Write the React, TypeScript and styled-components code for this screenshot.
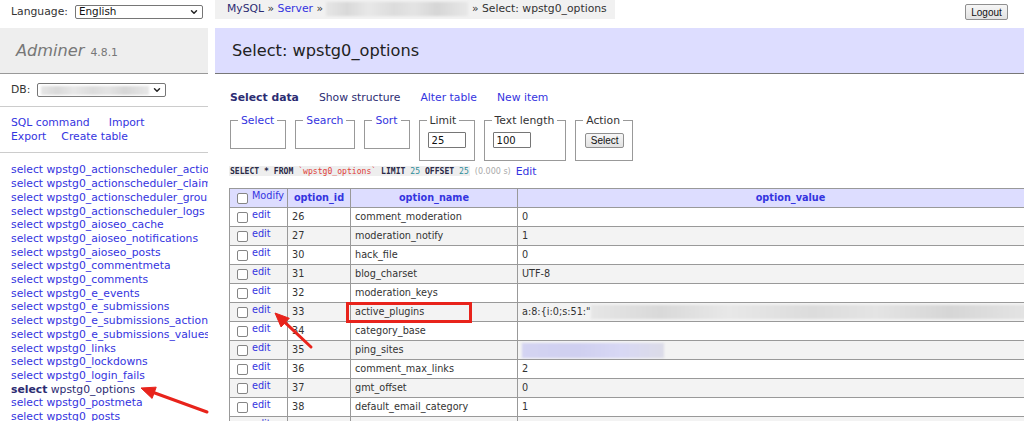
import React from "react";
import styled, { createGlobalStyle } from "styled-components";
import { ChevronDown } from "lucide-react";

const GlobalStyle = createGlobalStyle`
  body {
    margin: 0;
    background: #fff;
    color: #222;
    font: 10.8px/13.7px "DejaVu Sans", Verdana, sans-serif;
    overflow: hidden;
  }
`;

const LINK = "#3434e0";
const VISITED = "#2c2c72";

const Page = styled.div`
  position: relative;
  display: flex;
  width: 1024px;
  height: 421px;
  overflow: hidden;
`;

const Sidebar = styled.aside`
  flex: none;
  width: 208px;
`;

const LangRow = styled.div`
  display: flex;
  align-items: center;
  gap: 7px;
  height: 15px;
  padding: 4px 0 9px 11px;
  color: #333;
`;

const FakeSelect = styled.div<{ $w: number }>`
  position: relative;
  display: flex;
  align-items: center;
  justify-content: space-between;
  box-sizing: border-box;
  width: ${(p) => p.$w}px;
  height: 14px;
  padding: 0 3px;
  border: 1px solid #767676;
  border-radius: 2px;
  background: #fff;
  color: #111;
  font-size: 10.4px;
  svg {
    flex: none;
  }
`;

const Blur = styled.span<{ $w: number; $h: number; $tint?: string }>`
  display: inline-block;
  width: ${(p) => p.$w}px;
  height: ${(p) => p.$h}px;
  vertical-align: middle;
  background: ${(p) =>
    p.$tint ??
    "linear-gradient(90deg, #e6e6e6 0%, #d9d9d9 15%, #e8e8e8 30%, #dcdcdc 48%, #e4e4e4 62%, #d6d6d6 78%, #e8e8e8 100%)"};
  filter: blur(1.2px);
`;

const Brand = styled.h1`
  display: flex;
  align-items: baseline;
  gap: 6px;
  height: 45px;
  margin: 0;
  padding: 0 0 0 16px;
  box-sizing: content-box;
  background: #eee;
  border-bottom: 1px solid #999;
  color: #777;
  font-weight: normal;
  line-height: 46px;
  font-size: 16.2px;
`;

const BrandName = styled.span`
  font-style: italic;
`;

const Version = styled.span`
  font-size: 10.8px;
`;

const Section = styled.div<{ $pad: string }>`
  padding: ${(p) => p.$pad};
  border-bottom: 1px solid #ccc;
`;

const DbRow = styled.div`
  display: flex;
  align-items: center;
  gap: 7px;
  color: #333;
`;

const LinkLine = styled.div`
  display: flex;
  gap: 15px;
`;

const A = styled.a<{ $visited?: boolean; $bold?: boolean }>`
  color: ${(p) => (p.$visited ? VISITED : LINK)};
  font-weight: ${(p) => (p.$bold ? "bold" : "normal")};
  text-decoration: none;
  cursor: pointer;
`;

const TableList = styled.ul`
  list-style: none;
  margin: 0;
  padding: 10px 0 0 11px;
`;

const TableItem = styled.li`
  white-space: nowrap;
  overflow: hidden;
`;

const Main = styled.main`
  flex: 1;
  min-width: 0;
  margin-left: 7px;
`;

const TopBar = styled.div`
  display: flex;
  justify-content: space-between;
  align-items: flex-start;
  height: 28px;
`;

const Breadcrumb = styled.div`
  height: 19px;
  padding: 0 8px 0 12px;
  background: #f1f1f1;
  line-height: 18px;
  color: #333;
  white-space: nowrap;
`;

const LogoutButton = styled.button`
  margin: 4px 16px 0 0;
  width: 43px;
  height: 16px;
  padding: 0;
  border: 1px solid #8f8f8f;
  border-radius: 2px;
  background: linear-gradient(#f6f6f6, #e2e2e2);
  color: #111;
  font: 10px "Liberation Sans", Arial, sans-serif;
`;

const Heading = styled.h2`
  margin: 0;
  height: 45px;
  padding-left: 17px;
  background: #ddf;
  border-bottom: 1px solid #777;
  color: #222;
  font-weight: normal;
  font-size: 16.2px;
  line-height: 46px;
`;

const Content = styled.div`
  padding-left: 15px;
`;

const Nav = styled.div`
  display: flex;
  gap: 20px;
  margin-top: 17px;
`;

const Forms = styled.div`
  display: flex;
  align-items: flex-start;
  gap: 9px;
  margin-top: 9px;
`;

const Fieldset = styled.fieldset<{ $empty?: boolean }>`
  margin: 0;
  min-width: 0;
  padding: 5px 8px ${(p) => (p.$empty ? "16px" : "12px")} 7px;
  border: 1px solid #999;
`;

const Legend = styled.legend`
  padding: 0 3px;
  color: #333;
`;

const SmallInput = styled.input<{ $w: number }>`
  box-sizing: border-box;
  width: ${(p) => p.$w}px;
  height: 16px;
  margin: 0 0 0 1px;
  padding: 0 3px;
  border: 1px solid #767676;
  border-radius: 1px;
  font: 10px "DejaVu Sans", Verdana, sans-serif;
  color: #111;
`;

const SmallButton = styled.button`
  width: 39px;
  height: 15px;
  margin: 1px 0 0 2px;
  padding: 0;
  border: 1px solid #8f8f8f;
  border-radius: 2px;
  background: linear-gradient(#f6f6f6, #e2e2e2);
  color: #111;
  font: 10px "Liberation Sans", Arial, sans-serif;
`;

const SqlLine = styled.p`
  display: flex;
  align-items: center;
  gap: 5px;
  margin: 3px 0 0 -1px;
  height: 14px;
`;

const Code = styled.code`
  background: #eee;
  padding: 0 1px;
  font: bold 8.1px/10px "DejaVu Sans Mono", monospace;
  color: #2a2a48;
`;

const Tok = styled.span<{ $c: string }>`
  color: ${(p) => p.$c};
  font-weight: normal;
`;

const Time = styled.span`
  font: 8px "DejaVu Sans", sans-serif;
  color: #aaa;
`;

const Grid = styled.table`
  margin: 10px 0 0 -1px;
  border-collapse: collapse;
  table-layout: fixed;
  width: 834px;
  font-size: 9.7px;
  line-height: 12px;
`;

const Th = styled.th<{ $align?: string }>`
  height: 18px;
  padding: 0 4px;
  border: 1px solid #999;
  background: #ddf;
  color: ${LINK};
  text-align: ${(p) => p.$align ?? "center"};
  white-space: nowrap;
`;

const Row = styled.tr`
  &:nth-child(even) {
    background: #f3f3f3;
  }
`;

const Td = styled.td`
  position: relative;
  height: 18px;
  padding: 0 4px;
  border: 1px solid #999;
  color: #333;
  white-space: nowrap;
  overflow: hidden;
`;

const CheckCell = styled.span`
  display: flex;
  align-items: center;
  gap: 4px;
  padding-left: 3px;
  font-weight: normal;
  a {
    position: relative;
    top: -2px;
  }
`;

const Check = styled.span`
  box-sizing: border-box;
  width: 11px;
  height: 11px;
  border: 1px solid #858585;
  border-radius: 2px;
  background: #fff;
  flex: none;
`;

const Annotations = styled.svg`
  position: absolute;
  inset: 0;
  pointer-events: none;
`;

const tables = [
  "wpstg0_actionscheduler_actions",
  "wpstg0_actionscheduler_claims",
  "wpstg0_actionscheduler_groups",
  "wpstg0_actionscheduler_logs",
  "wpstg0_aioseo_cache",
  "wpstg0_aioseo_notifications",
  "wpstg0_aioseo_posts",
  "wpstg0_commentmeta",
  "wpstg0_comments",
  "wpstg0_e_events",
  "wpstg0_e_submissions",
  "wpstg0_e_submissions_actions_log",
  "wpstg0_e_submissions_values",
  "wpstg0_links",
  "wpstg0_lockdowns",
  "wpstg0_login_fails",
  "wpstg0_options",
  "wpstg0_postmeta",
  "wpstg0_posts",
];

type Option = { id: number; name: string; value: React.ReactNode };

const rows: Option[] = [
  { id: 26, name: "comment_moderation", value: "0" },
  { id: 27, name: "moderation_notify", value: "1" },
  { id: 30, name: "hack_file", value: "0" },
  { id: 31, name: "blog_charset", value: "UTF-8" },
  { id: 32, name: "moderation_keys", value: "" },
  {
    id: 33,
    name: "active_plugins",
    value: (
      <>
        a:8:{"{"}i:0;s:51:"
        <Blur $w={460} $h={14} />
      </>
    ),
  },
  { id: 34, name: "category_base", value: "" },
  {
    id: 35,
    name: "ping_sites",
    value: (
      <Blur
        $w={142}
        $h={15}
        $tint="linear-gradient(90deg, #d4d4f2, #cfcff0 40%, #d8d8f4 70%, #dcdce8)"
      />
    ),
  },
  { id: 36, name: "comment_max_links", value: "2" },
  { id: 37, name: "gmt_offset", value: "0" },
  { id: 38, name: "default_email_category", value: "1" },
  { id: 39, name: "default_category", value: "1" },
];

const Arrow = ({ x1, y1, x2, y2 }: { x1: number; y1: number; x2: number; y2: number }) => {
  const ang = Math.atan2(y2 - y1, x2 - x1);
  const len = 14;
  const half = 6;
  const bx = x2 - Math.cos(ang) * len;
  const by = y2 - Math.sin(ang) * len;
  const px = -Math.sin(ang) * half;
  const py = Math.cos(ang) * half;
  return (
    <g fill="#e8231b" stroke="#e8231b">
      <line x1={x1} y1={y1} x2={bx} y2={by} strokeWidth={3} strokeLinecap="round" />
      <polygon points={`${x2},${y2} ${bx + px},${by + py} ${bx - px},${by - py}`} />
    </g>
  );
};

export default function App() {
  return (
    <>
      <GlobalStyle />
      <Page>
        <Sidebar>
          <LangRow>
            Language:
            <FakeSelect $w={128}>
              English
              <ChevronDown size={10} strokeWidth={3.5} color="#222" />
            </FakeSelect>
          </LangRow>
          <Brand>
            <BrandName>Adminer</BrandName>
            <Version>4.8.1</Version>
          </Brand>
          <Section $pad="9px 0 9px 11px">
            <DbRow>
              DB:
              <FakeSelect $w={129}>
                <Blur $w={108} $h={9} />
                <ChevronDown size={10} strokeWidth={3.5} color="#222" />
              </FakeSelect>
            </DbRow>
          </Section>
          <Section $pad="9px 0 9px 11px">
            <LinkLine>
              <A>SQL command</A>
              <A style={{ marginLeft: 4 }}>Import</A>
            </LinkLine>
            <LinkLine>
              <A>Export</A>
              <A>Create table</A>
            </LinkLine>
          </Section>
          <TableList>
            {tables.map((t) => {
              const active = t === "wpstg0_options";
              return (
                <TableItem key={t}>
                  <A $visited={active} $bold={active}>
                    select
                  </A>{" "}
                  <A $visited={active}>{t}</A>
                </TableItem>
              );
            })}
          </TableList>
        </Sidebar>

        <Main>
          <TopBar>
            <Breadcrumb>
              <A $visited>MySQL</A> » <A>Server</A> » <Blur $w={142} $h={14} /> » Select:
              wpstg0_options
            </Breadcrumb>
            <LogoutButton>Logout</LogoutButton>
          </TopBar>
          <Heading>Select: wpstg0_options</Heading>
          <Content>
            <Nav>
              <A $visited $bold>
                Select data
              </A>
              <A $visited>Show structure</A>
              <A>Alter table</A>
              <A>New item</A>
            </Nav>
            <Forms>
              <Fieldset $empty>
                <Legend>
                  <A>Select</A>
                </Legend>
              </Fieldset>
              <Fieldset $empty>
                <Legend>
                  <A>Search</A>
                </Legend>
              </Fieldset>
              <Fieldset $empty>
                <Legend>
                  <A>Sort</A>
                </Legend>
              </Fieldset>
              <Fieldset>
                <Legend>Limit</Legend>
                <SmallInput $w={38} defaultValue="25" />
              </Fieldset>
              <Fieldset>
                <Legend>Text length</Legend>
                <SmallInput $w={38} defaultValue="100" />
              </Fieldset>
              <Fieldset>
                <Legend>Action</Legend>
                <SmallButton>Select</SmallButton>
              </Fieldset>
            </Forms>
            <SqlLine>
              <Code>
                SELECT * FROM <Tok $c="#e0413a">`wpstg0_options`</Tok> LIMIT{" "}
                <Tok $c="#2c8c9a">25</Tok> OFFSET <Tok $c="#2c8c9a">25</Tok>
              </Code>
              <Time>(0.000 s)</Time>
              <A>Edit</A>
            </SqlLine>
            <Grid>
              <colgroup>
                <col style={{ width: 58 }} />
                <col style={{ width: 63 }} />
                <col style={{ width: 167 }} />
                <col style={{ width: 546 }} />
              </colgroup>
              <thead>
                <tr>
                  <Th $align="left">
                    <CheckCell>
                      <Check />
                      <A>Modify</A>
                    </CheckCell>
                  </Th>
                  <Th>option_id</Th>
                  <Th>option_name</Th>
                  <Th>option_value</Th>
                </tr>
              </thead>
              <tbody>
                {rows.map((r) => (
                  <Row key={r.id}>
                    <Td>
                      <CheckCell>
                        <Check />
                        <A>edit</A>
                      </CheckCell>
                    </Td>
                    <Td>{r.id}</Td>
                    <Td>{r.name}</Td>
                    <Td>{r.value}</Td>
                  </Row>
                ))}
              </tbody>
            </Grid>
          </Content>
        </Main>

        <Annotations width={1024} height={421} viewBox="0 0 1024 421">
          <rect x={347.5} y={303.5} width={123} height={18} fill="none" stroke="#e8231b" strokeWidth={3} />
          <Arrow x1={311} y1={347} x2={275} y2={313} />
          <Arrow x1={207} y1={412} x2={141} y2={388} />
        </Annotations>
      </Page>
    </>
  );
}
